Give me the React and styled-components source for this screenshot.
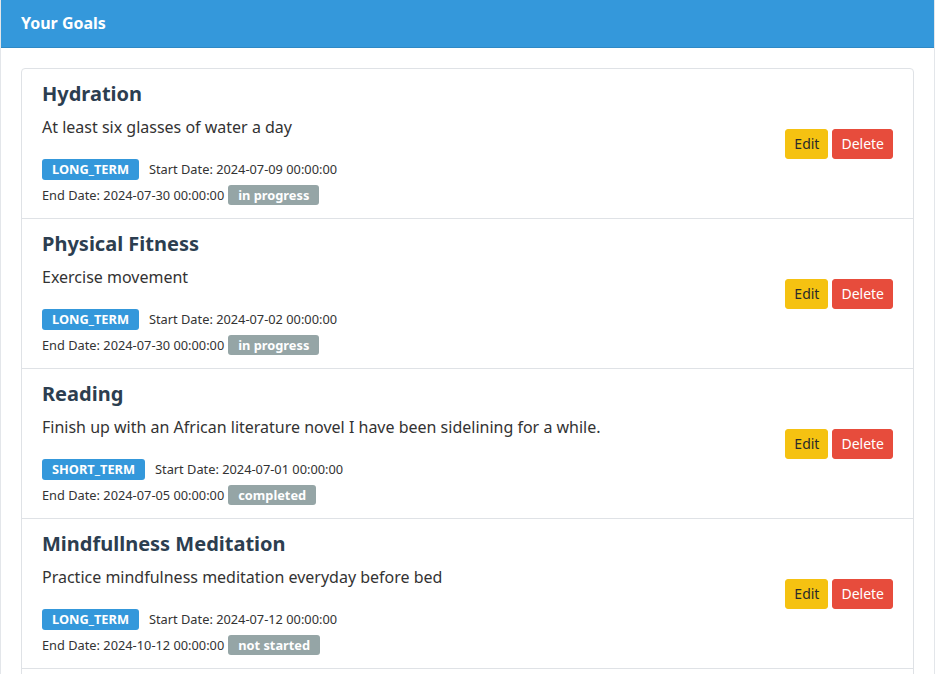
import React from "react";
import styled, { createGlobalStyle } from "styled-components";

const Global = createGlobalStyle`
  html, body { margin: 0; padding: 0; background: #fff; overflow: hidden; }
  body { font-family: "Noto Sans", "Open Sans", sans-serif; color: #333; }
  * { box-sizing: border-box; }
`;

const Card = styled.section`
  width: 935px;
  border: 1px solid #e3e6ea;
  border-top: none;
  background: #fff;
`;

const Header = styled.header`
  background: #3498db;
  border-bottom: 1px solid #2f89c5;
  padding: 12px 20px;
  line-height: 23px;
  color: #fff;
  font-weight: 700;
  font-size: 16px;
`;

const Body = styled.div`
  padding: 20px;
`;

const List = styled.ul`
  list-style: none;
  margin: 0;
  padding: 0;
  border: 1px solid #dfe2e6;
  border-radius: 4px;
`;

const Item = styled.li`
  display: flex;
  align-items: center;
  justify-content: space-between;
  padding: 13px 20px 11px;
  border-bottom: 1px solid #dfe2e6;
  &:last-child { border-bottom: none; }
`;

const Info = styled.div`
  display: flex;
  flex-direction: column;
`;

const Title = styled.h3`
  margin: 0 0 9px;
  font-size: 20px;
  line-height: 24px;
  font-weight: 700;
  color: #2c3e50;
`;

const Desc = styled.p`
  margin: 0 0 17px;
  font-size: 16px;
  line-height: 24px;
  color: #333;
`;

const MetaRow = styled.div`
  display: flex;
  align-items: center;
  height: ${(p) => (p.$first ? 26 : 25)}px;
  font-size: 12.8px;
  color: #333;
`;

const Badge = styled.span`
  display: inline-flex;
  align-items: center;
  height: ${(p) => (p.$kind === "type" ? 21 : 20)}px;
  padding: 0 10px;
  border-radius: 3px;
  font-size: 12.8px;
  font-weight: 700;
  color: #fff;
  background: ${(p) => (p.$kind === "type" ? "#3498db" : "#95a5a6")};
  margin: ${(p) => (p.$kind === "type" ? "0 10px 0 0" : "0 0 0 4px")};
`;

const Actions = styled.div`
  display: flex;
  gap: 4px;
  margin-bottom: 2px;
`;

const Button = styled.button`
  font-family: inherit;
  font-size: 14px;
  line-height: 20px;
  padding: 4px 8px;
  border-radius: 3px;
  border: 1px solid ${(p) => (p.$danger ? "#e74c3c" : "#f5c211")};
  background: ${(p) => (p.$danger ? "#e74c3c" : "#f5c211")};
  color: ${(p) => (p.$danger ? "#fff" : "#2b2b2b")};
  cursor: pointer;
`;

const goals = [
  { title: "Hydration", desc: "At least six glasses of water a day", type: "LONG_TERM", start: "2024-07-09 00:00:00", end: "2024-07-30 00:00:00", status: "in progress" },
  { title: "Physical Fitness", desc: "Exercise movement", type: "LONG_TERM", start: "2024-07-02 00:00:00", end: "2024-07-30 00:00:00", status: "in progress" },
  { title: "Reading", desc: "Finish up with an African literature novel I have been sidelining for a while.", type: "SHORT_TERM", start: "2024-07-01 00:00:00", end: "2024-07-05 00:00:00", status: "completed" },
  { title: "Mindfullness Meditation", desc: "Practice mindfulness meditation everyday before bed", type: "LONG_TERM", start: "2024-07-12 00:00:00", end: "2024-10-12 00:00:00", status: "not started" },
  { title: "Journaling", desc: "Write in my journal every evening", type: "SHORT_TERM", start: "2024-07-15 00:00:00", end: "2024-08-15 00:00:00", status: "not started" },
];

export default function App() {
  return (
    <>
      <Global />
      <Card>
        <Header>Your Goals</Header>
        <Body>
          <List>
            {goals.map((g) => (
              <Item key={g.title}>
                <Info>
                  <Title>{g.title}</Title>
                  <Desc>{g.desc}</Desc>
                  <MetaRow $first>
                    <Badge $kind="type">{g.type}</Badge>
                    Start Date: {g.start}
                  </MetaRow>
                  <MetaRow>
                    End Date: {g.end}
                    <Badge $kind="status">{g.status}</Badge>
                  </MetaRow>
                </Info>
                <Actions>
                  <Button>Edit</Button>
                  <Button $danger>Delete</Button>
                </Actions>
              </Item>
            ))}
          </List>
        </Body>
      </Card>
    </>
  );
}
